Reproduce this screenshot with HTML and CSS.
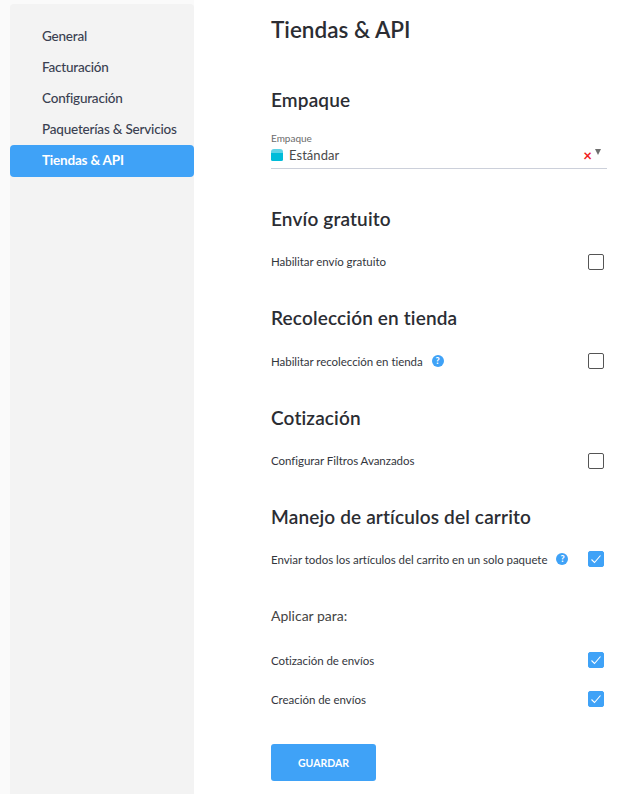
FILE: index.html
```html
<!DOCTYPE html>
<html lang="es">
<head>
  <meta charset="UTF-8" />
  <title>Tiendas & API</title>
  <link rel="stylesheet" href="styles.css">
</head>
<body>
  <div class="layout">
    <!-- MENU -->
    <nav class="sidebar">
      <a class="nav-item">General</a>
      <a class="nav-item">Facturación</a>
      <a class="nav-item">Configuración</a>
      <a class="nav-item">Paqueterías &amp; Servicios</a>
      <a class="nav-item active">Tiendas &amp; API</a>
    </nav>

    <!-- CONTENT -->
    <main class="content">
      <h1 class="page-title">Tiendas &amp; API</h1>

      <h2 class="section-title first">Empaque</h2>
      <div class="select-field">
        <div class="select-label">Empaque</div>
        <div class="select-value">
          <svg class="box-icon" width="12" height="12" viewBox="0 0 12 12">
            <path d="M3 0h6a3 3 0 0 1 3 3v1H0V3a3 3 0 0 1 3-3z" fill="#5ed3e6"/>
            <path d="M0 4h12v6.5a1.5 1.5 0 0 1-1.5 1.5h-9A1.5 1.5 0 0 1 0 10.5z" fill="#00bcd9"/>
          </svg>
          <span class="select-text">Estándar</span>
          <span class="select-clear">×</span>
          <span class="select-arrow"></span>
        </div>
      </div>

      <h2 class="section-title">Envío gratuito</h2>
      <div class="option-row">
        <span class="option-label">Habilitar envío gratuito</span>
        <span class="checkbox"></span>
      </div>

      <h2 class="section-title">Recolección en tienda</h2>
      <div class="option-row">
        <span class="option-label">Habilitar recolección en tienda</span>
        <span class="help">?</span>
        <span class="checkbox"></span>
      </div>

      <h2 class="section-title">Cotización</h2>
      <div class="option-row">
        <span class="option-label">Configurar Filtros Avanzados</span>
        <span class="checkbox"></span>
      </div>

      <h2 class="section-title cart">Manejo de artículos del carrito</h2>
      <div class="option-row">
        <span class="option-label">Enviar todos los artículos del carrito en un solo paquete</span>
        <span class="help">?</span>
        <span class="checkbox checked">
          <svg width="16" height="16" viewBox="0 0 16 16"><path d="M3.5 8.5l3 3 6-7" fill="none" stroke="#fff" stroke-width="1.1"/></svg>
        </span>
      </div>

      <div class="apply-title">Aplicar para:</div>
      <div class="option-row apply-row">
        <span class="option-label">Cotización de envíos</span>
        <span class="checkbox checked">
          <svg width="16" height="16" viewBox="0 0 16 16"><path d="M3.5 8.5l3 3 6-7" fill="none" stroke="#fff" stroke-width="1.1"/></svg>
        </span>
      </div>
      <div class="option-row apply-row second">
        <span class="option-label">Creación de envíos</span>
        <span class="checkbox checked">
          <svg width="16" height="16" viewBox="0 0 16 16"><path d="M3.5 8.5l3 3 6-7" fill="none" stroke="#fff" stroke-width="1.1"/></svg>
        </span>
      </div>

      <button class="save-button" type="button">GUARDAR</button>
    </main>
  </div>
</body>
</html>
```
FILE: styles.css
```css
html, body {
  height: 100%;
  margin: 0;
  padding: 0;
  font-family: 'Lato', 'Liberation Sans', sans-serif;
  background: #fff;
  overflow: hidden;
}
.layout {
  display: flex;
  height: 794px;
  padding-top: 4px;
  box-sizing: border-box;
  background: #fafafa;
}
.sidebar {
  width: 184px;
  margin-left: 10px;
  padding-top: 17px;
  box-sizing: border-box;
  background: #f3f3f3;
  border-radius: 4px 4px 0 0;
  flex-shrink: 0;
}
.nav-item {
  display: block;
  height: 31px;
  line-height: 30px;
  padding-left: 32px;
  font-size: 13.5px;
  letter-spacing: -0.2px;
  font-weight: 500;
  color: #3a3f51;
}
.nav-item.active {
  height: 32px;
  background: #3fa2f7;
  color: #fff;
  font-weight: 700;
  border-radius: 4px;
}
.content {
  flex: 1;
  margin-top: -4px;
  padding: 0 32px 0 77px;
  background: #fff;
  color: #2b2d33;
}
.page-title {
  margin: 15px 0 0;
  font-size: 22.5px;
  line-height: 30px;
  font-weight: 600;
}
.section-title {
  margin: 34.5px 0 0;
  font-size: 19px;
  letter-spacing: 0.15px;
  line-height: 24px;
  font-weight: 600;
}
.section-title.first {
  margin-top: 43px;
}
.section-title.cart {
  margin-top: 34.5px;
}
.section-title.cart + .option-row {
  margin-top: 20px;
}
.select-field {
  margin-top: 20px;
  height: 36px;
  border-bottom: 1px solid #ccd0da;
  margin-bottom: 37.5px;
}
.select-label {
  font-size: 10px;
  line-height: 12px;
  color: #6b6b6b;
}
.select-value {
  display: flex;
  align-items: center;
  height: 21px;
}
.box-icon {
  flex-shrink: 0;
}
.select-text {
  margin-left: 6px;
  font-size: 13px;
  letter-spacing: 0.05px;
  color: #4a4a4a;
  flex: 1;
}
.select-clear {
  color: #f01c1c;
  font-size: 15px;
  font-weight: 700;
  line-height: 15px;
  margin-top: 2px;
}
.select-arrow {
  width: 0;
  height: 0;
  margin: -5px 6px 0 3px;
  border-left: 3px solid transparent;
  border-right: 3px solid transparent;
  border-top: 6px solid #6f6f6f;
}
.option-row {
  display: flex;
  align-items: center;
  height: 20px;
  margin-top: 21px;
  padding-right: 3px;
}
.option-label {
  font-size: 11.5px;
  letter-spacing: -0.04px;
  font-weight: 400;
  color: #33363d;
}
.help {
  width: 12px;
  height: 12px;
  margin-left: 9px;
  border-radius: 50%;
  background: #3fa2f7;
  color: #fff;
  font-size: 9px;
  font-weight: 900;
  line-height: 12px;
  text-align: center;
}
.checkbox {
  width: 16px;
  height: 16px;
  margin-left: auto;
  border: 1px solid #555;
  border-radius: 2px;
  box-sizing: border-box;
  flex-shrink: 0;
}
.checkbox.checked {
  border-color: #3fa2f7;
  background: #3fa2f7;
}
.checkbox svg {
  display: block;
  margin: -1px;
}
.apply-title {
  margin-top: 37px;
  font-size: 14px;
  line-height: 20px;
  color: #444;
}
.apply-row {
  margin-top: 24px;
}
.apply-row.second {
  margin-top: 19px;
}
.save-button {
  display: block;
  width: 105px;
  height: 37px;
  margin-top: 35px;
  border: none;
  border-radius: 3px;
  background: #3fa2f7;
  color: #fff;
  font-family: inherit;
  font-size: 10.5px;
  font-weight: 700;
}
```
